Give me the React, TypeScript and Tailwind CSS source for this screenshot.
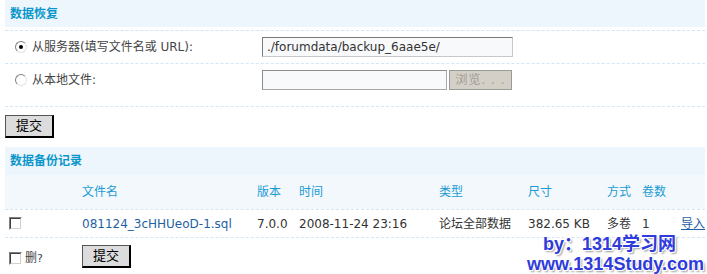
import React from "react";

function Radio({ checked }: { checked?: boolean }) {
  return (
    <span className="w-[12px] h-[12px] rounded-full border border-t-[#808080] border-l-[#808080] border-r-[#E4E4E4] border-b-[#E4E4E4] bg-white flex items-center justify-center shrink-0">
      {checked ? <span className="w-[4px] h-[4px] rounded-full bg-black" /> : null}
    </span>
  );
}

function Check() {
  return (
    <span className="w-[13px] h-[13px] border border-t-[#808080] border-l-[#808080] border-r-white border-b-white flex shrink-0">
      <span className="flex-1 border border-t-[#404040] border-l-[#404040] border-r-[#D4D0C8] border-b-[#D4D0C8] bg-white" />
    </span>
  );
}

export default function App() {
  return (
    <div className="w-[707px] h-[274px] bg-white relative overflow-hidden text-[12px] leading-[16px] text-[#444] font-['DejaVu_Sans','Noto_Sans_CJK_SC',sans-serif]">
      <div className="ml-[5px] w-[700px]">
        <div className="h-[27px] bg-[#EEF6FD] flex items-center pl-[5px] font-bold text-[#0A96CB]">数据恢复</div>

        <div className="mt-[3px] h-[33px] border-t border-dashed border-[#D3E6F7] flex items-center">
          <div className="w-[257px] flex items-center pl-[10px] gap-[5px]">
            <Radio checked />
            <span>从服务器(填写文件名或 URL):</span>
          </div>
          <input
            readOnly
            value="./forumdata/backup_6aae5e/"
            className="w-[251px] h-[20px] px-[4px] bg-[#F8F9FB] text-[#333] text-[12px] border border-t-[#7A7A7A] border-l-[#7A7A7A] border-r-[#C8C8C8] border-b-[#C8C8C8] outline-none"
          />
        </div>

        <div className="h-[43px] pt-[6px] border-t border-dashed border-[#D3E6F7] flex items-start">
          <div className="w-[257px] h-[20px] flex items-center pl-[10px] gap-[5px]">
            <Radio />
            <span>从本地文件:</span>
          </div>
          <input
            readOnly
            value=""
            className="w-[185px] h-[20px] px-[4px] bg-[#F8F9FB] text-[#333] text-[12px] border border-t-[#8A8A8A] border-l-[#8A8A8A] border-r-[#A8A8A8] border-b-[#A8A8A8] outline-none"
          />
          <button className="ml-[2px] w-[63px] h-[20px] bg-[#D4D0C8] border border-[#9A9A9A] text-[#A09C96] text-[12px] flex items-center justify-center tracking-[1px]">
            浏览. . .
          </button>
        </div>

        <div className="border-t border-dashed border-[#D3E6F7]" />

        <button className="mt-[8px] w-[49px] h-[23px] bg-[#DCDCDC] border-t border-l border-[#555] border-r-2 border-b-2 border-r-black border-b-black text-black text-[13px] flex items-center justify-center">
          提交
        </button>

        <div className="mt-[9px] h-[28px] bg-[#EEF6FD] flex items-center pl-[5px] font-bold text-[#0A96CB]">数据备份记录</div>

        <div className="h-[34px] bg-[#F3F8FD] grid grid-cols-[77px_175px_42px_140px_89px_79px_35px_39px_1fr] items-center text-[#1A9BD3]">
          <span />
          <span>文件名</span>
          <span>版本</span>
          <span>时间</span>
          <span>类型</span>
          <span>尺寸</span>
          <span>方式</span>
          <span>卷数</span>
          <span />
        </div>

        <div className="h-[28px] border-t border-dashed border-[#D3E6F7] grid grid-cols-[77px_175px_42px_140px_89px_79px_35px_39px_1fr] items-center text-[#333]">
          <span className="pl-[4px] flex"><Check /></span>
          <span className="text-[#1F5FA3]">081124_3cHHUeoD-1.sql</span>
          <span>7.0.0</span>
          <span>2008-11-24 23:16</span>
          <span>论坛全部数据</span>
          <span>382.65 KB</span>
          <span>多卷</span>
          <span>1</span>
          <span className="text-[#1F5FA3] underline">导入</span>
        </div>

        <div className="h-[37px] border-t border-dashed border-[#D3E6F7] flex items-start pt-[7px]">
          <div className="w-[77px] pl-[4px] pt-[5px] flex items-center gap-[3px]">
            <Check />
            <span className="text-[#444]">删<span className="text-[11px]">?</span></span>
          </div>
          <button className="w-[49px] h-[23px] bg-[#DCDCDC] border-t border-l border-[#555] border-r-2 border-b-2 border-r-black border-b-black text-black text-[13px] flex items-center justify-center">
            提交
          </button>
        </div>
      </div>

      <div className="absolute left-[527px] top-[234px] font-['Liberation_Sans','Noto_Sans_CJK_SC',sans-serif] font-bold text-[18px] leading-[20px] text-[#2F3BDB] whitespace-nowrap [text-shadow:1px_1px_0_#fff,-1px_-1px_0_#fff,1px_-1px_0_#fff,-1px_1px_0_#fff,2px_2px_2px_#9a9a9a]">
        <div className="pl-[16px]">by：1314学习网</div>
        <div>www.1314Study.com</div>
      </div>
    </div>
  );
}
